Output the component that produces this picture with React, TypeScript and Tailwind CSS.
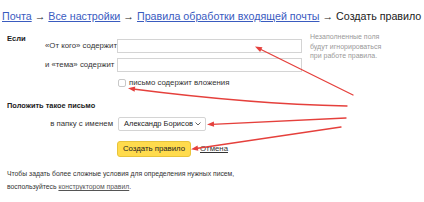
import React from "react";

type Pt = [number, number];

// triangle for an arrow tip, pointing from `from` towards `tip`
function head(tip: Pt, from: Pt, len = 7, half = 2.6) {
  const dx = tip[0] - from[0];
  const dy = tip[1] - from[1];
  const d = Math.hypot(dx, dy);
  const ux = dx / d;
  const uy = dy / d;
  const bx = tip[0] - ux * len;
  const by = tip[1] - uy * len;
  return `${tip[0]},${tip[1]} ${bx - uy * half},${by + ux * half} ${bx + uy * half},${by - ux * half}`;
}

function Arrows() {
  const red = "#e5403c";
  return (
    <svg
      className="pointer-events-none absolute inset-0"
      width={424}
      height={202}
      viewBox="0 0 424 202"
    >
      <g stroke={red} strokeWidth={1.3} fill="none" strokeLinecap="round">
        <path d="M353 95 L260 49" />
        <path d="M347 106 Q250 104 133 89" />
        <path d="M346 118 L212 124.3" />
        <path d="M341 127 L196 148.5" />
      </g>
      <g fill={red}>
        <polygon points={head([255, 46.5], [353, 95])} />
        <polygon points={head([128, 88.3], [200, 97.5])} />
        <polygon points={head([207, 124.5], [346, 118])} />
        <polygon points={head([191, 149.2], [341, 127])} />
      </g>
    </svg>
  );
}

function Field() {
  return <div className="h-[14px] w-[185px] border border-[#d4d4d4] bg-white" />;
}

export default function App() {
  return (
    <div className="relative h-[202px] w-[424px] overflow-hidden bg-white font-['Liberation_Sans',Arial,sans-serif] text-[8px] leading-[10px] text-[#333]">
      <div className="whitespace-nowrap pl-[2px] pt-[9px] text-[10.7px] leading-[14px] text-[#222]">
        <a className="text-[#3a5bbf] underline">Почта</a> →{" "}
        <a className="text-[#3a5bbf] underline">Все настройки</a> →{" "}
        <a className="text-[#3a5bbf] underline">Правила обработки входящей почты</a> → Создать
        правило
      </div>

      <div className="mt-[11px] flex pl-[7px]">
        <div className="w-[38px] text-[7.6px] font-bold text-[#222]">Если</div>
        <div className="flex flex-col pt-[5px]">
          <div className="flex items-center gap-[4px]">
            <span className="w-[68px] text-right whitespace-nowrap text-[7.8px]">«От кого» содержит</span>
            <Field />
          </div>
          <div className="mt-[5px] flex items-center gap-[4px]">
            <span className="w-[68px] text-right whitespace-nowrap text-[7.8px]">и «тема» содержит</span>
            <Field />
          </div>
          <label className="mt-[6px] ml-[73px] flex items-center gap-[3px]">
            <span className="h-[8px] w-[8px] rounded-[2px] border border-[#c8c8c8] bg-white" />
            <span className="text-[7.8px]">письмо содержит вложения</span>
          </label>
        </div>
        <div className="-mt-[2px] pl-[8px] text-[7px] leading-[9.5px] text-[#999]">
          Незаполненные поля
          <br />
          будут игнорироваться
          <br />
          при работе правила.
        </div>
      </div>

      <div className="mt-[13px] pl-[7px] text-[7.4px] font-bold text-[#222]">Положить такое письмо</div>

      <div className="mt-[6px] flex items-center gap-[5px] pl-[45px]">
        <span className="w-[68px] text-right whitespace-nowrap text-[7.8px]">в папку с именем</span>
        <div className="flex h-[14px] w-[88px] items-center justify-between rounded-[2px] border border-[#d4d4d4] bg-white pl-[5px] pr-[4px] text-[7.5px] text-[#222]">
          <span className="whitespace-nowrap">Александр Борисов</span>
          <svg width="6" height="4" viewBox="0 0 6 4" fill="none" stroke="#555" strokeWidth="0.9">
            <path d="M0.5 0.5 L3 3 L5.5 0.5" />
          </svg>
        </div>
      </div>

      <div className="mt-[10px] flex items-center gap-[9px] pl-[117px]">
        <button className="h-[16px] w-[74px] rounded-[3px] border border-[#e8c43b] bg-[#ffdb4d] text-[7.8px] leading-[14px] text-[#222]">
          Создать правило
        </button>
        <a className="text-[7.8px] text-[#333] underline">Отмена</a>
      </div>

      <div className="mt-[10px] pl-[7px] text-[6.8px] leading-[13px]">
        Чтобы задать более сложные условия для определения нужных писем,
        <br />
        воспользуйтесь <a className="text-[#555] underline">конструктором правил</a>.
      </div>

      <Arrows />
    </div>
  );
}
